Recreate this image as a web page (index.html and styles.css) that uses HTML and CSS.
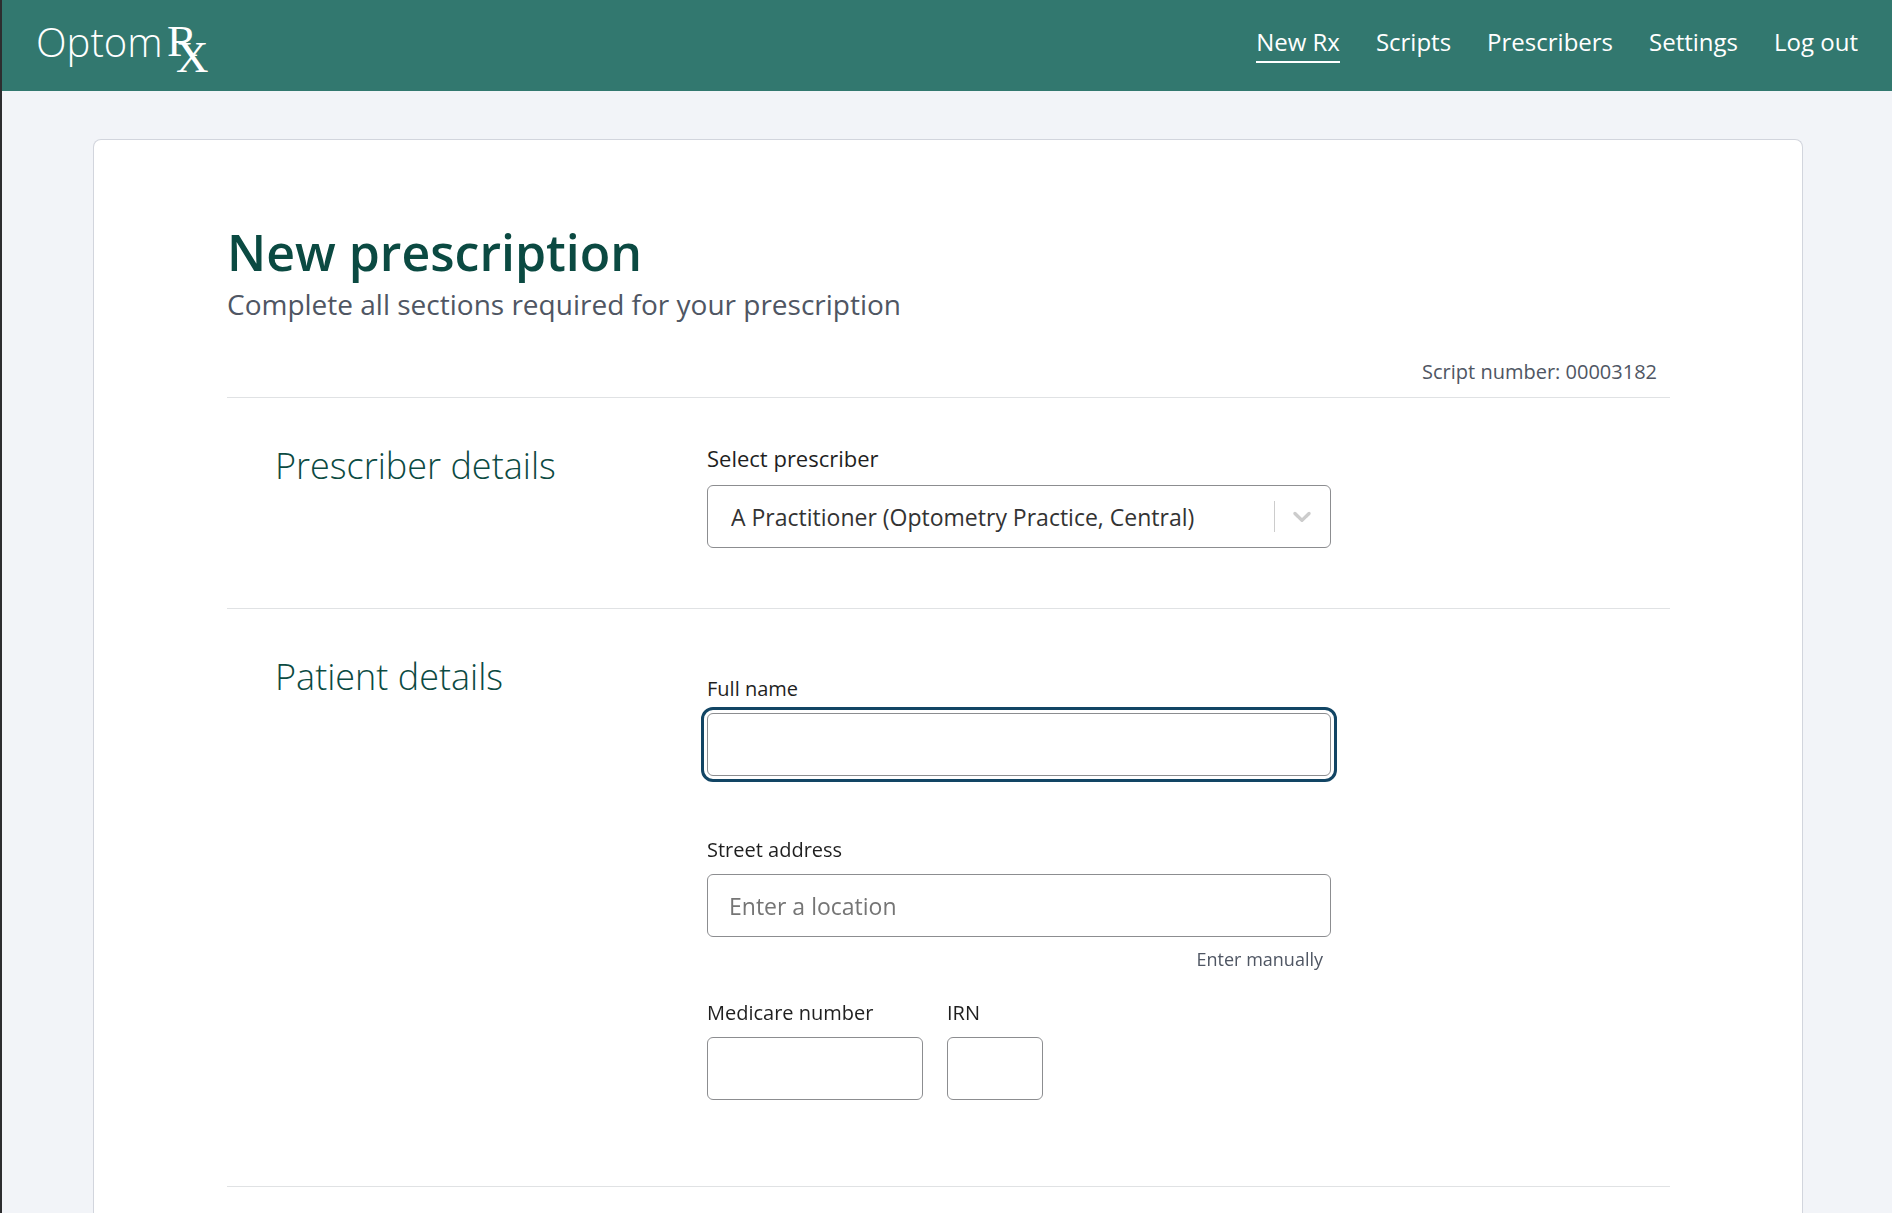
FILE: index.html
```html
<!DOCTYPE html>
<html lang="en">
<head>
  <meta charset="utf-8">
  <meta name="viewport" content="width=device-width, initial-scale=1">
  <title>New prescription | OptomRx</title>
  <link rel="stylesheet" href="styles.css">
</head>
<body>
  <header class="header">
    <a class="logo" href="#">
      <span class="logo-name">Optom</span>
      <svg class="logo-mark" viewBox="0 0 42 50" width="42" height="50" role="img" aria-label="Rx">
        <text y="34">R<tspan x="9" y="50">X</tspan></text>
      </svg>
    </a>
    <nav class="nav">
      <a class="nav-link nav-link-active" href="#" aria-current="page">New Rx</a>
      <a class="nav-link" href="#">Scripts</a>
      <a class="nav-link" href="#">Prescribers</a>
      <a class="nav-link" href="#">Settings</a>
      <a class="nav-link" href="#">Log out</a>
    </nav>
  </header>

  <main class="card">
    <h1 class="title">New prescription</h1>
    <p class="subtitle">Complete all sections required for your prescription</p>
    <p class="script-number">Script number: 00003182</p>

    <form>
      <section class="section">
        <h2 class="section-title">Prescriber details</h2>
        <div class="fields">
          <div class="field">
            <label class="label label-large" for="prescriber">Select prescriber</label>
            <div class="select">
              <select class="control select-control" id="prescriber">
                <option>A Practitioner (Optometry Practice, Central)</option>
              </select>
              <span class="select-indicator">
                <svg viewBox="0 0 20 20" width="30" height="30" aria-hidden="true">
                  <path d="M4.516 7.548c0.436-0.446 1.043-0.481 1.576 0l3.908 3.747 3.908-3.747c0.533-0.481 1.141-0.446 1.574 0 0.436 0.445 0.408 1.197 0 1.615-0.406 0.418-4.695 4.502-4.695 4.502-0.217 0.223-0.502 0.335-0.787 0.335s-0.57-0.112-0.789-0.335c0 0-4.287-4.084-4.695-4.502s-0.436-1.17 0-1.615z"/>
                </svg>
              </span>
            </div>
          </div>
        </div>
      </section>

      <section class="section">
        <h2 class="section-title">Patient details</h2>
        <div class="fields fields-patient">
          <div class="field field-name">
            <label class="label" for="name">Full name</label>
            <input class="control" id="name" type="text" autofocus>
          </div>
          <div class="field">
            <label class="label" for="address">Street address</label>
            <input class="control" id="address" type="text" placeholder="Enter a location">
            <button class="manual" type="button">Enter manually</button>
          </div>
          <div class="field-row">
            <div class="field field-medicare">
              <label class="label" for="medicare">Medicare number</label>
              <input class="control" id="medicare" type="text">
            </div>
            <div class="field field-irn">
              <label class="label" for="irn">IRN</label>
              <input class="control" id="irn" type="text">
            </div>
          </div>
        </div>
      </section>

      <section class="section"></section>
    </form>
  </main>
</body>
</html>
```
FILE: styles.css
```css
* {
  box-sizing: border-box;
}

html {
  overflow: hidden;
}

body {
  margin: 0;
  min-height: 100vh;
  border-left: 2px solid #2d2d2f;
  background: #f2f4f8;
  color: #1f1f1f;
  font-family: "Open Sans", "Noto Sans", sans-serif;
}

h1,
h2,
p {
  margin: 0;
}

.header {
  display: flex;
  justify-content: space-between;
  align-items: flex-start;
  height: 91px;
  padding: 22px 34px 0 34px;
  background: #32786f;
}

.logo {
  display: flex;
  gap: 4px;
  color: #fff;
  text-decoration: none;
}

.logo-name {
  font-size: 40px;
  font-weight: 300;
  line-height: 40px;
}

.logo-mark {
  overflow: visible;
  fill: #fff;
  font-family: "Liberation Serif", serif;
  font-size: 45px;
}

.nav {
  display: flex;
  gap: 36px;
  padding-top: 4px;
}

.nav-link {
  padding-bottom: 3px;
  border-bottom: 2px solid transparent;
  color: #fff;
  font-size: 24px;
  line-height: 32px;
  text-decoration: none;
}

.nav-link-active {
  border-bottom-color: #fff;
}

.card {
  margin: 48px 89px 0 91px;
  padding: 80px 132px 96px 133px;
  border: 1px solid #d2d5dd;
  border-bottom: 0;
  border-radius: 8px 8px 0 0;
  background: #fff;
}

.title {
  color: #0b4a42;
  font-size: 50px;
  font-weight: 600;
  line-height: 64px;
}

.subtitle {
  color: #4f5663;
  font-size: 28px;
  line-height: 40px;
}

.script-number {
  padding: 32px 13px 9px 0;
  color: #4f5663;
  font-size: 20px;
  line-height: 32px;
  text-align: right;
}

.section {
  display: grid;
  grid-template-columns: minmax(0, 480px) minmax(0, 1fr);
  padding-bottom: 60px;
  border-top: 1px solid #e0e2e4;
}

.section-title {
  padding: 44px 0 0 48px;
  color: #0b4a42;
  font-size: 36px;
  font-weight: 300;
  line-height: 48px;
}

.fields {
  display: flex;
  flex-direction: column;
  max-width: 624px;
  padding-top: 44px;
}

.fields-patient {
  gap: 24px;
  padding-top: 64px;
  padding-bottom: 26px;
}

.field {
  display: flex;
  flex-direction: column;
}

.field-name {
  margin-bottom: 34px;
}

.label {
  padding-bottom: 8px;
  font-size: 20px;
  line-height: 32px;
}

.label-large {
  padding-bottom: 11px;
  font-size: 22px;
}

.control {
  width: 100%;
  height: 63px;
  padding: 0 21px;
  border: 1px solid #8c8d90;
  border-radius: 6px;
  background: #fff;
  color: #333;
  font: inherit;
  font-size: 23px;
}

.control::placeholder {
  color: #757575;
}

.control:focus {
  outline: 3px solid #124564;
  outline-offset: 3px;
}

.select {
  position: relative;
}

.select-control {
  padding-left: 23px;
  padding-right: 64px;
  appearance: none;
}

.select-indicator {
  position: absolute;
  top: 16px;
  right: 14px;
  height: 31px;
  padding-left: 12px;
  border-left: 1px solid #ccc;
  pointer-events: none;
}

.select-indicator svg {
  display: block;
  fill: #ccc;
}

.manual {
  align-self: flex-end;
  padding: 8px 8px 0;
  border: 0;
  background: none;
  color: #4f5663;
  font: inherit;
  font-size: 18px;
  line-height: 28px;
}

.field-row {
  display: flex;
  gap: 24px;
}

.field-medicare {
  width: 216px;
}

.field-irn {
  width: 96px;
}
```
